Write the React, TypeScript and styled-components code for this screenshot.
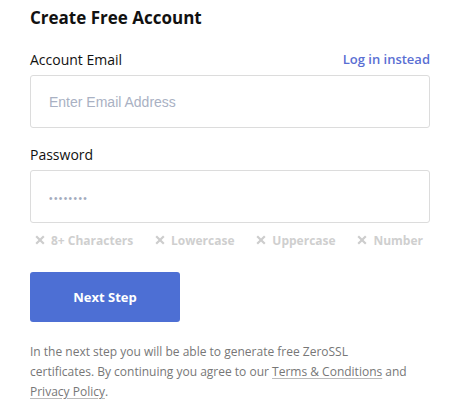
import React from "react";
import styled, { createGlobalStyle } from "styled-components";

const Global = createGlobalStyle`
  html, body { margin: 0; padding: 0; background: #fff; }
  body { font-family: "Open Sans", "Liberation Sans", sans-serif; }
  * { box-sizing: border-box; }
`;

const Page = styled.div`
  width: 452px;
  padding: 6px 22px 0 30px;
  display: flex;
  flex-direction: column;
`;

const Title = styled.h1`
  margin: 0;
  font-size: 17px;
  line-height: 24px;
  font-weight: 700;
  color: #111;
`;

const LabelRow = styled.div<{ $top: number }>`
  display: flex;
  justify-content: space-between;
  align-items: center;
  margin-top: ${(p) => p.$top}px;
  height: 22px;
`;

const Label = styled.label`
  font-size: 14px;
  color: #111;
`;

const Link = styled.a`
  font-size: 13px;
  font-weight: 600;
  color: #5a6fd3;
  text-decoration: none;
`;

const Input = styled.input`
  margin-top: 5px;
  width: 400px;
  height: 53px;
  border: 1px solid #dcdcdc;
  border-radius: 3px;
  padding: 0 18px;
  font-family: "Liberation Sans", Arial, sans-serif;
  font-size: 14px;
  color: #333;
  outline: none;
  &::placeholder { color: #a9b1c3; }
`;

const PwInput = styled(Input)`
  &::placeholder { color: #a3abbd; font-size: 10px; letter-spacing: 1.4px; }
`;

const Reqs = styled.div`
  display: flex;
  justify-content: space-between;
  padding: 0 7px 0 5px;
  margin-top: 8px;
  height: 18px;
  align-items: center;
`;

const Req = styled.span`
  font-size: 12px;
  font-weight: 700;
  color: #cfcfcf;
  display: inline-flex;
  align-items: center;
  gap: 6px;
`;

const XIcon = () => (
  <svg width="10" height="10" viewBox="0 0 10 10">
    <path d="M1.2 1.2 L8.8 8.8 M8.8 1.2 L1.2 8.8" stroke="#cdcdcd" strokeWidth="2.2" />
  </svg>
);

const Button = styled.button`
  margin-top: 23px;
  width: 150px;
  height: 50px;
  border: none;
  border-radius: 3px;
  background: #4d6fd4;
  color: #fff;
  font-family: "Open Sans", sans-serif;
  font-size: 13px;
  font-weight: 700;
`;

const Note = styled.p`
  margin: 20px 0 0;
  font-size: 12px;
  line-height: 20px;
  color: #777;
  width: 380px;
`;

const NoteLink = styled.a`
  color: #777;
  text-decoration: underline;
  text-decoration-color: #bbb;
  text-underline-offset: 2px;
`;

export default function App() {
  return (
    <Page>
      <Global />
      <Title>Create Free Account</Title>
      <LabelRow $top={18}>
        <Label>Account Email</Label>
        <Link href="#">Log in instead</Link>
      </LabelRow>
      <Input placeholder="Enter Email Address" />
      <LabelRow $top={15}>
        <Label>Password</Label>
      </LabelRow>
      <PwInput type="password" placeholder="••••••••" />
      <Reqs>
        {["8+ Characters", "Lowercase", "Uppercase", "Number"].map((r) => (
          <Req key={r}>
            <XIcon />
            {r}
          </Req>
        ))}
      </Reqs>
      <Button>Next Step</Button>
      <Note>
        In the next step you will be able to generate free ZeroSSL certificates. By continuing you agree to our{" "}
        <NoteLink href="#">Terms &amp; Conditions</NoteLink> and <NoteLink href="#">Privacy Policy</NoteLink>.
      </Note>
    </Page>
  );
}
